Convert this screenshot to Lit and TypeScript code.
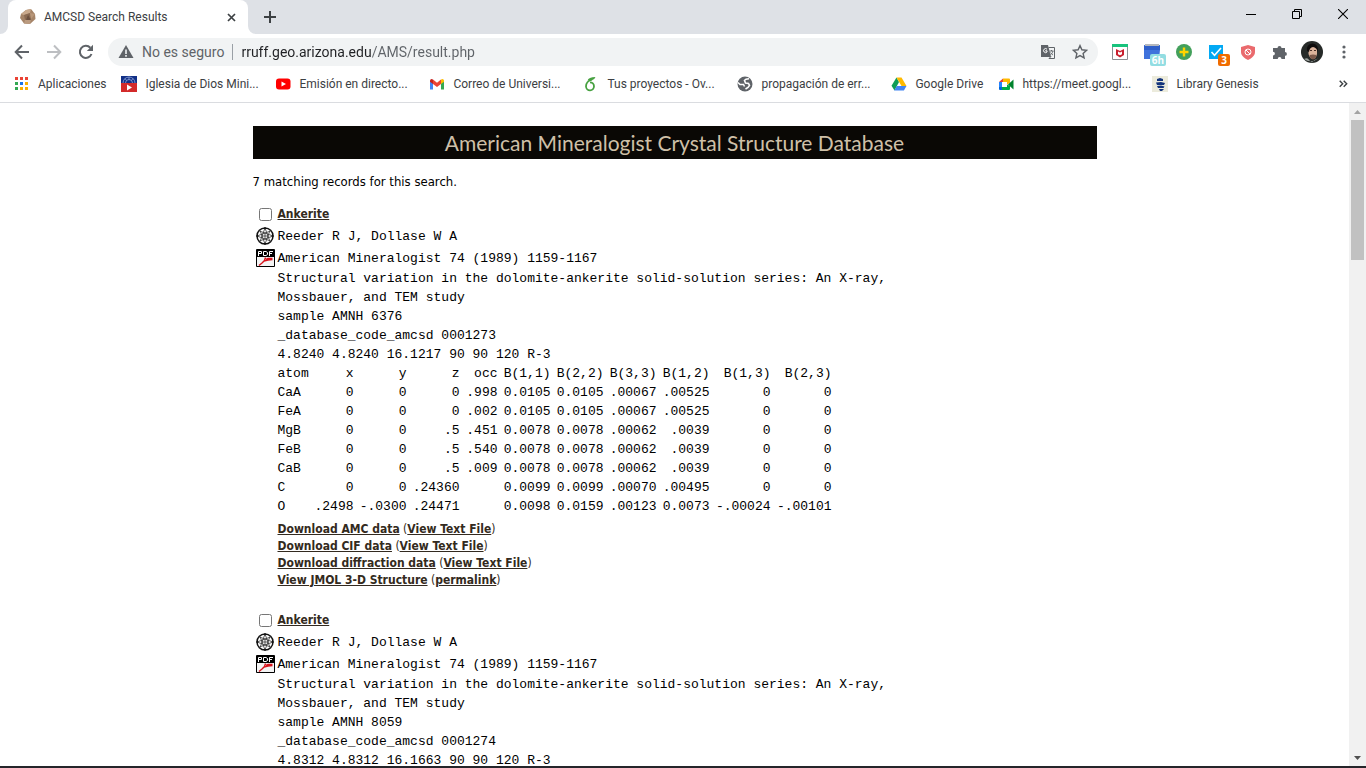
import { LitElement, html, svg, css } from 'lit';
import { customElement, property } from 'lit/decorators.js';

type Row = string[];

interface MineralRecord {
  name: string;
  authors: string;
  journal: string;
  notes: string[];
  atoms: Row[];
}

const columns: Row = ['atom', 'x', 'y', 'z', 'occ', 'B(1,1)', 'B(2,2)', 'B(3,3)', 'B(1,2)', 'B(1,3)', 'B(2,3)'];

const atoms: Row[] = [
  ['CaA', '0', '0', '0', '.998', '0.0105', '0.0105', '.00067', '.00525', '0', '0'],
  ['FeA', '0', '0', '0', '.002', '0.0105', '0.0105', '.00067', '.00525', '0', '0'],
  ['MgB', '0', '0', '.5', '.451', '0.0078', '0.0078', '.00062', '.0039', '0', '0'],
  ['FeB', '0', '0', '.5', '.540', '0.0078', '0.0078', '.00062', '.0039', '0', '0'],
  ['CaB', '0', '0', '.5', '.009', '0.0078', '0.0078', '.00062', '.0039', '0', '0'],
  ['C', '0', '0', '.24360', '', '0.0099', '0.0099', '.00070', '.00495', '0', '0'],
  ['O', '.2498', '-.0300', '.24471', '', '0.0098', '0.0159', '.00123', '0.0073', '-.00024', '-.00101'],
];

const title = [
  'Structural variation in the dolomite-ankerite solid-solution series: An X-ray,',
  'Mossbauer, and TEM study',
];

const records: MineralRecord[] = [
  {
    name: 'Ankerite',
    authors: 'Reeder R J, Dollase W A',
    journal: 'American Mineralogist 74 (1989) 1159-1167',
    notes: [...title, 'sample AMNH 6376', '_database_code_amcsd 0001273', '4.8240 4.8240 16.1217 90 90 120 R-3'],
    atoms,
  },
  {
    name: 'Ankerite',
    authors: 'Reeder R J, Dollase W A',
    journal: 'American Mineralogist 74 (1989) 1159-1167',
    notes: [...title, 'sample AMNH 8059', '_database_code_amcsd 0001274', '4.8312 4.8312 16.1663 90 90 120 R-3'],
    atoms: [],
  },
];

const icon = (body: unknown, w = 16, h = w) =>
  html`<svg width=${w} height=${h} viewBox="0 0 ${w} ${h}" aria-hidden="true">${body}</svg>`;

const icons = {
  mineral: icon(svg`<path d="M6 1 11 0 15 5 15.500 10 10 15 4 14.500 0 9 1 5Z" fill="#a58468"/><path d="M6 1 11 0 10 4 4 6 1 5Z" fill="#c9a98c"/><path d="M4 6 10 4 11 10 5 11Z" fill="#8a6a52"/><path d="M10 4 15 5 11 10Z" fill="#b8977a"/><path d="M5 11 11 10 10 15 4 14.500Z" fill="#bb9b80"/><path d="m8 6 3 5-5 0Z" fill="#6b503f"/>`),
  close: icon(svg`<path d="m1 1 7 7M8 1 1 8" stroke="#3c4043" stroke-width="1.700"/>`, 9),
  plus: icon(svg`<path d="M6 0v12M0 6h12" stroke="#3c4043" stroke-width="2"/>`, 12),
  minimize: icon(svg`<path d="M0 5.500h10" stroke="#000"/>`, 10),
  restore: icon(svg`<path d="M.5 2.500h7v7h-7zM2.500 2.500v-2h7v7h-2" fill="none" stroke="#000"/>`, 10),
  quit: icon(svg`<path d="m0 0 10 10M10 0 0 10" stroke="#000" stroke-width="1.100"/>`, 10),
  back: icon(svg`<path d="M15 8H2M8 1.500 1.700 8 8 14.500" fill="none" stroke="#5f6368" stroke-width="2"/>`),
  forward: icon(svg`<path d="M1 8h13M8 1.500 14.300 8 8 14.500" fill="none" stroke="#bdbfc2" stroke-width="2"/>`),
  reload: icon(svg`<path d="M13.500 10A6 6 0 1 1 12.300 3.800" fill="none" stroke="#5f6368" stroke-width="2"/><path d="M15 .8V7H8.800Z" fill="#5f6368"/>`),
  warning: icon(svg`<path d="M8 1 15.500 14H.5Z" fill="#5f6368"/><path d="M8 5.500V10M8 11v1.700" stroke="#f1f3f4" stroke-width="1.600"/>`),
  translate: icon(svg`<path d="M1 1h7l3 12H1Z" fill="#5f6368"/><path d="M8.500 3.500h6v11H9l2-2" fill="none" stroke="#5f6368"/><path d="M7 5.200A2 2 0 1 0 7 8V6.800H5.200" fill="none" stroke="#fff"/><path d="M9.500 7h4M11.500 6v1M13 7c-.5 2-1.500 3-2.800 4M10.500 8.500c.5 1 1.500 2 2.500 2.500" fill="none" stroke="#5f6368" stroke-width=".9"/>`),
  star: icon(svg`<path d="m8 1.600 1.900 4.200 4.600.5-3.400 3.100 1 4.500L8 11.600l-4.100 2.300 1-4.500L1.500 6.300l4.600-.5Z" fill="none" stroke="#5f6368" stroke-width="1.400"/>`),
  shieldMc: icon(svg`<path d="M.5.500h15v15H.5Z" fill="#fff" stroke="#8b8f94"/><path d="M0 0h16v3H0Z" fill="#19c37d"/><path d="M4 5 8 7l4-2v6l-4 2.500L4 11Z" fill="#c8202f"/><path d="m6 7.500 2 1 2-1v2.700L8 11.300 6 10.200Z" fill="#fff"/>`),
  calendar: icon(svg`<path d="M0 1h16v5l-1 9H0Z" fill="#3f72dc"/><path d="M1 0h14v2.500H1Z" fill="#b5b8bd"/><path d="M0 2h16v4H0Z" fill="#2f5fc9"/>`),
  addGreen: icon(svg`<circle cx="8" cy="8" r="8" fill="#43a05b"/><path d="M8 3.500v9M3.500 8h9" stroke="#ffd400" stroke-width="2.400"/>`),
  task: icon(svg`<path d="M1 1h14v14H1Z" fill="#03a9f4"/><path d="m3.500 8 3 3.200L13 4" fill="none" stroke="#fff" stroke-width="1.600"/>`),
  shieldRed: icon(svg`<path d="M8 1 15 3v5c0 3.500-3 6-7 8-4-2-7-4.500-7-8V3Z" fill="#ea6a6d"/><circle cx="8" cy="8" r="3" fill="none" stroke="#fff"/><path d="m6 6 4 4" stroke="#fff"/>`),
  puzzle: icon(svg`<path d="M1 4h4.500a2 2 0 1 1 4 0H13v4a1.900 1.900 0 1 1 0 3.800V15H9.500a1.900 1.900 0 1 0-3.800 0H1v-3.500a1.900 1.900 0 1 0 0-3.800Z" fill="#5f6368"/>`),
  avatar: icon(svg`<circle cx="11" cy="11" r="11" fill="#262a28"/><path d="M7.500 7q4-4 8.500 0v6q-1 5-4 5t-4.500-5Z" fill="#dbb39b"/><path d="M6 10Q5 3 11.500 2.500 18 3 17 11 15.500 6.500 12 6 8.500 6.500 8 11Z" fill="#0e0c0c"/><path d="M9 9.500h2M13 9.500h2" stroke="#4b3229"/><path d="M8.500 14q3.500-1 7 0-.5 4-3.500 4.500-3-.5-3.500-4.500Z" fill="#7d5a4b"/><path d="M3 18q4-2 5 1l3 2.500q2-3 6-4a11 11 0 0 1-14 .5Z" fill="#9da39f"/>`, 22),
  dots: icon(svg`<circle cx="8" cy="3" r="1.600" fill="#5f6368"/><circle cx="8" cy="8" r="1.600" fill="#5f6368"/><circle cx="8" cy="13" r="1.600" fill="#5f6368"/>`),
  apps: icon(svg`<path d="M1 1h3v3H1zM6 1h3v3H6zM11 1h3v3h-3z" fill="#ea4335"/><path d="M1 6h3v3H1zM1 11h3v3H1z" fill="#34a853"/><path d="M6 6h3v3H6z" fill="#1a73e8"/><path d="M11 6h3v3h-3zM6 11h3v3H6zM11 11h3v3h-3z" fill="#fbaf00"/>`),
  church: icon(svg`<path d="M0 0h16v8H0Z" fill="#123087"/><path d="M0 7h16v9H0Z" fill="#d32a2a"/><path d="M2 7a6 6 0 0 1 12 0M4.500 7a3.500 3.500 0 0 1 7 0M8 1v3M4 2.500l1.500 2M12 2.500l-1.500 2" fill="none" stroke="#8fa3d8" stroke-width=".8"/><path d="m6 8.500 5 3-5 3Z" fill="#fff"/>`),
  youtube: icon(svg`<rect x="1" y="2.500" width="14.500" height="11" rx="3" fill="#f00"/><path d="m6.500 5.500 4.500 2.500-4.500 2.500Z" fill="#fff"/>`),
  gmail: icon(svg`<path d="M1 4v9.500h3V7Z" fill="#4285f4"/><path d="M15 4v9.500h-3V7Z" fill="#34a853"/><path d="M4 3.500 8 6.700l4-3.200V8l-4 3-4-3Z" fill="#ea4335"/><path d="M1 4.500Q1.500 2 4 3.500V8L1 5.800Z" fill="#c5221f"/><path d="M15 4.500Q14.500 2 12 3.500V8l3-2.200Z" fill="#fbbc04"/>`),
  overleaf: icon(svg`<path d="M9 3.500C5.500 4.500 3 7 3 10.500a4 4 0 1 0 4-4.200" fill="none" stroke="#47a141" stroke-width="1.800"/><path d="M4.500 4.500Q5.500 1 12.500 1q-1 3-4 3.500Z" fill="#47a141"/>`),
  globe: icon(svg`<circle cx="8" cy="8" r="7.500" fill="#5f6368"/><path d="M12 2.800 9 3.200 7.500 4.500 8.500 7l3 .5L12.500 9.500 11 11.500 8.500 13" fill="none" stroke="#fff" stroke-width="1.600"/><path d="M1 6.500 3 8.500 6.500 8.500 7.500 10.500" fill="none" stroke="#fff" stroke-width="1.500"/>`),
  drive: icon(svg`<path d="M5.500 1.500 8 6 3.500 14.500.500 9.700Z" fill="#0f9d58"/><path d="M5.500 1.500h5L15.500 10h-5Z" fill="#ffba00"/><path d="M3.200 14.500 5.800 10h9.700l-2.600 4.500Z" fill="#4285f4"/>`),
  meet: icon(svg`<path d="M1 6 5 2.500V6Z" fill="#ea4335"/><path d="M1 6h3v5H1Z" fill="#2684fc"/><path d="M1 11h3v3H2q-1 0-1-1Z" fill="#0066da"/><path d="M5 2.500h6q1 0 1 1V7L9 8.500V6H5Z" fill="#ffba00"/><path d="M4 11h5V8.500l3 1.500v3q0 1-1 1H4Z" fill="#00ac47"/><path d="m10 8.500 5.500-5v10Z" fill="#00832d"/>`),
  library: icon(svg`<path d="M0 0h16v16H0Z" fill="#ecebdc"/><path d="M5 3 8 2l3 1v2H5ZM4 6.500l5-.5 4 1-1 2H5ZM5 10l4-.5 3.500 1-1 1.500H6ZM7 13h5l-2 2H8Z" fill="#14357c"/>`),
  crystal: icon(svg`<g fill="none" stroke="#333" stroke-width=".8"><circle cx="9" cy="9" r="8" stroke="#111" stroke-width="1.500"/><path d="M9 1 4 14.500M9 1l5 13.500M1 9 14.500 4M1 9l13.500 5M17 9 3.500 4M17 9 3.500 14M9 17 4 3.500M9 17l5-13.500M5.500 9h7M9 5.500v7"/></g><g fill="#111"><circle cx="9" cy="1.300" r="1"/><circle cx="9" cy="16.700" r="1"/><circle cx="1.300" cy="9" r="1"/><circle cx="16.700" cy="9" r="1"/></g>`, 18),
  pdf: icon(svg`<path d="M.5.500h18v17H.5Z" fill="#f4f4f4" stroke="#000"/><path d="M1 1h17v7H1Z" fill="#000"/><path d="M2.500 7V2.500h3v2h-3M7.500 2.500h2.500l1.500 1v2l-1.500 1H7.500ZM13.500 7V2.500H17M13.500 4.500H16" fill="none" stroke="#fff"/><path d="M3 16.500 6 14 8.500 11.500 9.500 8.500M8 12 12 11 16.500 10.500M10 10.500l2-1h4.500" fill="none" stroke="#d8131c" stroke-width="1.400"/>`, 19, 18),
  arrowUp: icon(svg`<path d="M0 4 3.500 0 7 4Z" fill="#a3a3a3"/>`, 7, 4),
  arrowDown: icon(svg`<path d="M0 0 3.500 4 7 0Z" fill="#505050"/>`, 7, 4),
  tabEdge: icon(svg`<path d="M8 0v8H0A8 8 0 0 0 8 0Z" fill="#fff"/>`, 8),
  tabEdgeRight: icon(svg`<path d="M0 0v8h8A8 8 0 0 1 0 0Z" fill="#fff"/>`, 8),
  more: icon(svg`<path d="m.7.700 3 3-3 3M4.700.700l3 3-3 3" fill="none" stroke="#3c4043" stroke-width="1.400"/>`, 9, 8),
};

@customElement('mineral-record')
class MineralRecordView extends LitElement {
  @property({ attribute: false }) record!: MineralRecord;

  static styles = css`
    :host { display: block; margin-bottom: 20px; }
    .line { display: grid; grid-template-columns: 25px 1fr; align-items: center; height: 22px; }
    .line > :first-child { justify-self: center; margin: 0; }
    svg { display: block; }
    input { width: 13px; height: 13px; }
    .mono, table { font: 13px/19px 'Liberation Mono', monospace; white-space: pre; }
    p { margin: 0; }
    .body { padding-left: 25px; }
    table { border-collapse: collapse; table-layout: fixed; width: 554px; }
    th, td { padding: 0; font-weight: normal; text-align: right; }
    th:first-child { text-align: left; }
    .atom { width: 33px; }
    .x { width: 43px; }
    .occ { width: 38px; }
    .cross { width: 61px; }
    a { color: #332a20; font-weight: bold; text-decoration: underline; }
    .links { list-style: none; margin: 5px 0 0; padding: 0; }
    .name, .links { font: 12px/17px 'DejaVu Sans Condensed', 'Noto Sans', sans-serif; color: #332a20; }
  `;

  render() {
    const r = this.record;
    const extras = [
      ['Download AMC data', 'View Text File'],
      ['Download CIF data', 'View Text File'],
      ['Download diffraction data', 'View Text File'],
      ['View JMOL 3-D Structure', 'permalink'],
    ];
    const kinds = ['atom', 'x', '', '', 'occ', '', '', '', '', 'cross', 'cross'];
    return html`
      <div class="line"><input type="checkbox" aria-label="Select ${r.name}" /><span class="name"><a href="#">${r.name}</a></span></div>
      <div class="line">${icons.crystal}<span class="mono">${r.authors}</span></div>
      <div class="line">${icons.pdf}<span class="mono">${r.journal}</span></div>
      <div class="body">
        ${r.notes.map((n) => html`<p class="mono">${n}</p>`)}
        ${r.atoms.length
          ? html`<table>
                <thead><tr>${columns.map((c, i) => html`<th scope="col" class=${kinds[i]}>${c}</th>`)}</tr></thead>
                <tbody>
                  ${r.atoms.map((a) => html`<tr>${a.map((v, i) => (i ? html`<td>${v}</td>` : html`<th scope="row">${v}</th>`))}</tr>`)}
                </tbody>
              </table>
              <ul class="links">${extras.map(([a, b]) => html`<li><a href="#">${a}</a> (<a href="#">${b}</a>)</li>`)}</ul>`
          : ''}
      </div>
    `;
  }
}

@customElement('app-root')
class AppRoot extends LitElement {
  static styles = css`
    :host { display: flex; flex-direction: column; height: 100vh; overflow: hidden; background: #fff; font: 12px/16px Roboto, sans-serif; color: #3c4043; }
    svg { display: block; flex: none; }
    button { display: flex; align-items: center; justify-content: center; padding: 0; border: 0; background: none; font: inherit; color: inherit; }
    .strip { display: flex; align-items: stretch; height: 34px; background: #dee1e6; }
    .edge { align-self: flex-end; }
    .tab { display: flex; align-items: center; gap: 8px; width: 216px; padding: 0 12px; border-radius: 8px 8px 0 0; background: #fff; }
    .tab span { flex: 1; }
    .new { width: 28px; }
    .window { display: flex; margin-left: auto; height: 28px; }
    .window button { width: 46px; }
    .toolbar { display: flex; align-items: center; height: 36px; padding: 0 6px; }
    .toolbar > button { position: relative; width: 32px; height: 32px; }
    .omnibox { display: flex; align-items: center; flex: 1; height: 28px; margin: 0 6px; padding: 0 10px; border-radius: 14px; background: #f1f3f4; font-size: 14px; gap: 8px; color: #5f6368; }
    .divider { width: 1px; height: 16px; background: #9aa0a6; }
    .omnibox input { flex: 1; min-width: 0; border: 0; padding: 0; outline: 0; font: inherit; color: transparent; background: linear-gradient(90deg, #202124 131px, #5f6368 131px); -webkit-background-clip: text; background-clip: text; }
    .actions { display: flex; gap: 16px; }
    .badge { position: absolute; right: 2px; bottom: 2px; padding: 0 3px; border-radius: 2px; background: #f06c00; color: #fff; font: bold 10px/12px 'Open Sans', sans-serif; }
    .hours { padding: 0 2px; background: #92dde2; }
    .bookmarks { display: flex; align-items: center; gap: 15px; height: 28px; padding: 0 18px 4px 14px; border-bottom: 1px solid #dadce0; }
    .bookmark { display: flex; align-items: center; gap: 8px; min-width: 92px; color: inherit; text-decoration: none; white-space: nowrap; }
    .long { width: 139px; }
    .more { margin-left: auto; }
    .viewport { display: flex; flex: 1; min-height: 0; }
    main { flex: 1; overflow: hidden; padding-top: 23px; color: #000; }
    .content { max-width: 844px; margin: 0 auto; }
    h1 { margin: 0; background: #0a0805; color: #cfc0a8; text-align: center; font: 21px/33px Lato, sans-serif; }
    .count { margin: 13px 0 11px; font: 13px/20px 'DejaVu Sans Condensed', 'Noto Sans', sans-serif; }
    .scroll { display: flex; flex-direction: column; align-items: center; width: 17px; background: #f1f1f1; }
    .scroll button { width: 17px; height: 17px; }
    .thumb { width: 13px; height: 140px; background: #c1c1c1; margin-bottom: auto; }
    .taskbar { height: 2px; background: #25252a; }
  `;

  render() {
    const bookmarks: [unknown, string, boolean][] = [
      [icons.apps, 'Aplicaciones', false],
      [icons.church, 'Iglesia de Dios Mini...', true],
      [icons.youtube, 'Emisión en directo...', true],
      [icons.gmail, 'Correo de Universi...', true],
      [icons.overleaf, 'Tus proyectos - Ov...', true],
      [icons.globe, 'propagación de err...', true],
      [icons.drive, 'Google Drive', false],
      [icons.meet, 'https://meet.googl...', true],
      [icons.library, 'Library Genesis', false],
    ];
    return html`
      <div class="strip">
        <span class="edge">${icons.tabEdge}</span>
        <div class="tab">${icons.mineral}<span>AMCSD Search Results</span><button aria-label="Cerrar pestaña">${icons.close}</button></div>
        <span class="edge">${icons.tabEdgeRight}</span>
        <button class="new" aria-label="Nueva pestaña">${icons.plus}</button>
        <div class="window">
          <button aria-label="Minimizar">${icons.minimize}</button>
          <button aria-label="Restaurar">${icons.restore}</button>
          <button aria-label="Cerrar">${icons.quit}</button>
        </div>
      </div>
      <div class="toolbar">
        <button aria-label="Atrás">${icons.back}</button>
        <button aria-label="Adelante">${icons.forward}</button>
        <button aria-label="Recargar">${icons.reload}</button>
        <div class="omnibox">
          ${icons.warning}<span>No es seguro</span><span class="divider"></span>
          <input aria-label="Dirección" .value=${'rruff.geo.arizona.edu/AMS/result.php'} />
          <div class="actions"><button aria-label="Traducir">${icons.translate}</button><button aria-label="Favorito">${icons.star}</button></div>
        </div>
        <button aria-label="McAfee">${icons.shieldMc}</button>
        <button aria-label="Calendario">${icons.calendar}<span class="badge hours">6h</span></button>
        <button aria-label="Añadir">${icons.addGreen}</button>
        <button aria-label="Tareas">${icons.task}<span class="badge">3</span></button>
        <button aria-label="Bloqueador">${icons.shieldRed}</button>
        <button aria-label="Extensiones">${icons.puzzle}</button>
        <button aria-label="Perfil">${icons.avatar}</button>
        <button aria-label="Menú">${icons.dots}</button>
      </div>
      <nav class="bookmarks">
        ${bookmarks.map(([i, label, long]) => html`<a href="#" class="bookmark ${long ? 'long' : ''}">${i}<span>${label}</span></a>`)}
        <button class="more" aria-label="Más marcadores">${icons.more}</button>
      </nav>
      <div class="viewport">
        <main>
          <div class="content">
            <h1>American Mineralogist Crystal Structure Database</h1>
            <p class="count">7 matching records for this search.</p>
            ${records.map((r) => html`<mineral-record .record=${r}></mineral-record>`)}
          </div>
        </main>
        <div class="scroll">
          <button aria-label="Subir">${icons.arrowUp}</button>
          <div class="thumb"></div>
          <button aria-label="Bajar">${icons.arrowDown}</button>
        </div>
      </div>
      <div class="taskbar"></div>
    `;
  }
}
